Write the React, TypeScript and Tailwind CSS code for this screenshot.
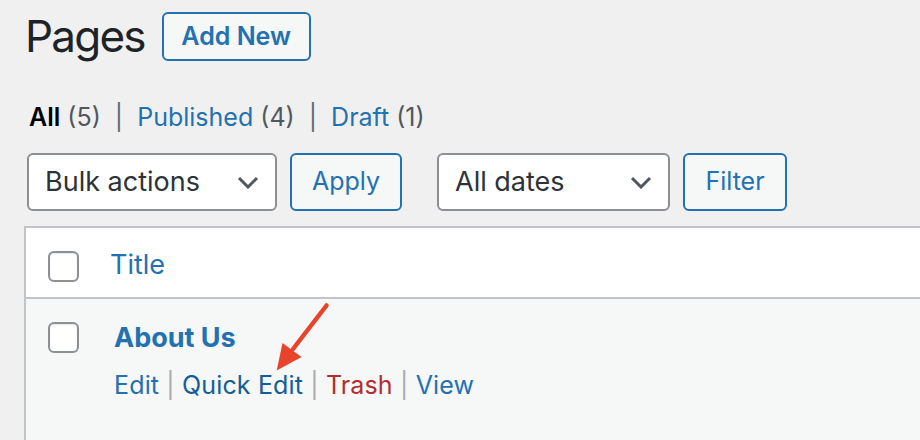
const font = { fontFamily: 'Inter, "Noto Sans", sans-serif' }

const Chevron = () => (
  <svg width="22" height="13" viewBox="0 0 22 13" className="shrink-0">
    <polyline points="2,2 11,11 20,2" fill="none" stroke="#50575e" strokeWidth="3" strokeLinejoin="miter" />
  </svg>
)

const Checkbox = () => (
  <div className="w-[31px] h-[31px] shrink-0 rounded-[6px] border-2 border-[#8c8f94] bg-white shadow-[inset_0_1px_2px_rgba(0,0,0,0.1)]" />
)

export default function App() {
  return (
    <div className="relative w-[920px] h-[440px] overflow-hidden bg-[#f0f0f1] pl-[24px] pt-[12px]" style={font}>
      {/* heading */}
      <div className="flex items-center h-[49px]">
        <h1 className="ml-[1px] -mt-[2px] text-[44px] leading-none font-normal tracking-[-1.8px] text-[#1d2327]">Pages</h1>
        <button className="ml-[17px] h-[49px] w-[149px] rounded-[6px] border-2 border-[#2271b1] bg-[#f6f7f7] text-[25px] font-semibold text-[#2271b1]">
          Add New
        </button>
      </div>

      {/* status filters */}
      <div className="ml-[5px] mt-[38px] h-[36px] leading-[36px] text-[25px] text-[#646970] whitespace-pre">
        <span className="font-semibold text-black">All</span>
        <span className="text-[#50575e]"> (5)</span>
        <span>  |  </span>
        <span className="text-[#2271b1]">Published</span>
        <span className="text-[#50575e]"> (4)</span>
        <span>  |  </span>
        <span className="text-[#2271b1]">Draft</span>
        <span className="text-[#50575e]"> (1)</span>
      </div>

      {/* table nav */}
      <div className="ml-[3px] mt-[18px] flex items-center">
        <div className="flex items-center justify-between w-[250px] h-[58px] rounded-[6px] border-2 border-[#8c8f94] bg-white pl-[16px] pr-[16px] text-[27px] text-[#2c3338]">
          <span>Bulk actions</span>
          <Chevron />
        </div>
        <button className="ml-[13px] w-[112px] h-[58px] rounded-[6px] border-2 border-[#2271b1] bg-[#f6f7f7] text-[25px] text-[#2271b1]">
          Apply
        </button>
        <div className="ml-[35px] flex items-center justify-between w-[233px] h-[58px] rounded-[6px] border-2 border-[#8c8f94] bg-white pl-[16px] pr-[16px] text-[27px] text-[#2c3338]">
          <span>All dates</span>
          <Chevron />
        </div>
        <button className="ml-[13px] w-[104px] h-[58px] rounded-[6px] border-2 border-[#2271b1] bg-[#f6f7f7] text-[25px] text-[#2271b1]">
          Filter
        </button>
      </div>

      {/* list table */}
      <div className="mt-[15px] w-[980px] border-2 border-[#c3c4c7] bg-[#f6f7f7]">
        <div className="flex items-start h-[71px] bg-white border-b-2 border-[#c3c4c7]">
          <div className="ml-[22px] mt-[23px]">
            <Checkbox />
          </div>
          <div className="ml-[31px] mt-[17px] text-[27px] leading-[40px] text-[#2271b1]">Title</div>
        </div>
        <div className="flex items-start h-[200px]">
          <div className="ml-[22px] mt-[23px]">
            <Checkbox />
          </div>
          <div className="ml-[35px] mt-[19px]">
            <div className="text-[27px] leading-[40px] font-bold text-[#2271b1]">About Us</div>
            <div className="mt-[9px] text-[25px] leading-[36px] tracking-[0.15px] text-[#a7aaad] whitespace-pre">
              <span className="text-[#2271b1]">Edit</span>
              <span> | </span>
              <span className="text-[#135e96]">Quick Edit</span>
              <span> | </span>
              <span className="text-[#b32d2e]">Trash</span>
              <span> | </span>
              <span className="text-[#2271b1]">View</span>
            </div>
          </div>
        </div>
      </div>

      {/* annotation arrow */}
      <svg className="absolute left-0 top-0 pointer-events-none" width="920" height="440">
        <line x1="326.5" y1="305.5" x2="293" y2="349" stroke="#e8442b" strokeWidth="4.5" strokeLinecap="round" />
        <polygon points="276.7,370.5 282.5,343 301.5,357" fill="#e8442b" />
      </svg>
    </div>
  )
}
